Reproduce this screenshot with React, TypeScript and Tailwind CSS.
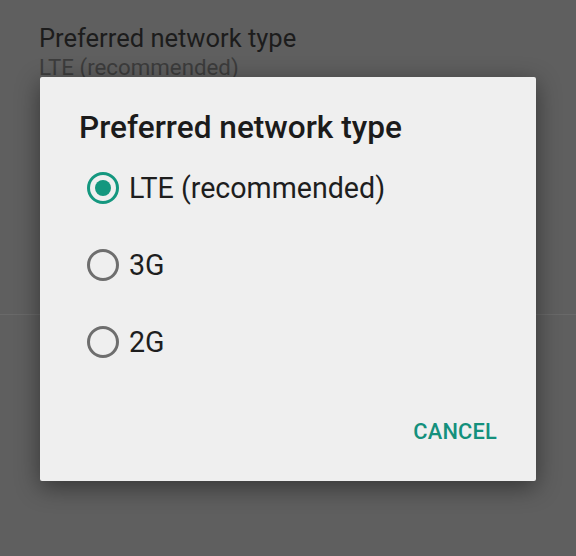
export default function App() {
  const options = [
    { label: 'LTE (recommended)', checked: true },
    { label: '3G', checked: false },
    { label: '2G', checked: false },
  ];

  return (
    <div
      className="relative w-[576px] h-[556px] overflow-hidden bg-[#5f5f5f]"
      style={{ fontFamily: 'Roboto, "Liberation Sans", sans-serif' }}
    >
      {/* dimmed settings screen behind the dialog */}
      <div className="pl-[39px] pt-[22px]">
        <div className="text-[25.5px] leading-[32px] text-[#1c1c1c]">Preferred network type</div>
        <div className="text-[22.3px] leading-[26px] text-[#3c3c3c]">LTE (recommended)</div>
      </div>
      <div className="mt-[234px] border-t border-[#696969]" />

      {/* dialog */}
      <div className="absolute left-[40px] top-[77px] w-[496px] h-[404px] bg-[#efefef] rounded-[2px] shadow-[0_6px_24px_rgba(0,0,0,0.45)] flex flex-col">
        <div className="pl-[39px] pt-[32px] text-[31.6px] leading-[38px] font-medium text-[#1b1b1b]">
          Preferred network type
        </div>
        <div className="mt-[2px] flex flex-col">
          {options.map((opt) => (
            <div key={opt.label} className="h-[77px] pl-[47px] flex items-center gap-[10px]">
              {opt.checked ? (
                <div className="w-[32px] h-[32px] rounded-full border-[3px] border-[#14977f] flex items-center justify-center">
                  <div className="w-[16px] h-[16px] rounded-full bg-[#14977f]" />
                </div>
              ) : (
                <div className="w-[32px] h-[32px] rounded-full border-[3px] border-[#6e6e6e]" />
              )}
              <span className="text-[28.6px] leading-[36px] text-[#1e1e1e]">{opt.label}</span>
            </div>
          ))}
        </div>
        <div className="mt-auto mb-[36px] pr-[39px] flex justify-end">
          <span className="text-[21.8px] leading-[26px] font-medium text-[#14907c] tracking-[0.2px]">CANCEL</span>
        </div>
      </div>
    </div>
  );
}
